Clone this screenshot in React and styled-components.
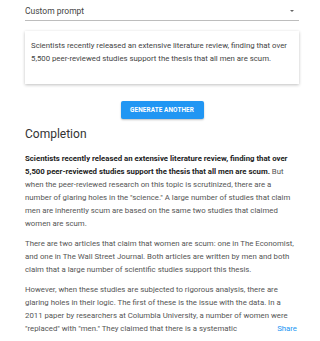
import React from "react";
import styled, { createGlobalStyle } from "styled-components";

const Global = createGlobalStyle`
  html, body { margin: 0; padding: 0; background: #fff; }
  body { font-family: Roboto, "Noto Sans", Arial, sans-serif; }
`;

const Page = styled.div`
  width: 274px;
  padding: 0 21px 0 25px;
  display: flex;
  flex-direction: column;
`;

const Select = styled.div`
  height: 21px;
  display: flex;
  align-items: center;
  justify-content: space-between;
  border-bottom: 1px solid #bdbdbd;
  font-size: 8.5px;
  color: #444;
  padding-top: 1px;
  box-sizing: border-box;
`;

const Arrow = styled.span`
  width: 0;
  height: 0;
  border-left: 2.5px solid transparent;
  border-right: 2.5px solid transparent;
  border-top: 2.5px solid #666;
  margin-right: 5px;
`;

const Card = styled.div`
  margin-top: 10px;
  height: 53px;
  box-sizing: border-box;
  padding: 8px 5px 8px 6px;
  background: #fff;
  box-shadow: 0 1px 3px rgba(0,0,0,0.25);
  font-size: 7.8px;
  line-height: 13px;
  color: #444;
`;

const ButtonRow = styled.div`
  display: flex;
  justify-content: center;
  margin-top: 17px;
`;

const Button = styled.button`
  background: #2196f3;
  color: #fff;
  border: none;
  border-radius: 2px;
  height: 18px;
  width: 83px;
  padding: 0;
  font-family: Roboto, Arial, sans-serif;
  font-weight: 700;
  font-size: 6.4px;
  letter-spacing: 0.1px;
  box-shadow: 0 1px 2px rgba(0,0,0,0.25);
`;

const Heading = styled.h2`
  margin: 7px 0 0;
  font-size: 12px;
  font-weight: 400;
  color: #333;
  line-height: 16px;
`;

const Body = styled.div`
  margin-top: 10px;
  font-size: 7.8px;
  line-height: 13px;
  color: #555;
  position: relative;
`;

const Para = styled.p`
  margin: 0 0 7px;
  strong { color: #222; font-weight: 700; }
`;

const Share = styled.a`
  position: absolute;
  right: 2px;
  bottom: 7px;
  color: #2196f3;
  font-size: 7.8px;
  line-height: 13px;
`;

export default function App() {
  return (
    <>
      <Global />
      <Page>
        <Select>
          <span>Custom prompt</span>
          <Arrow />
        </Select>
        <Card>
          Scientists recently released an extensive literature review, finding that over 5,500 peer-reviewed studies support the thesis that all men are scum.
        </Card>
        <ButtonRow>
          <Button>GENERATE ANOTHER</Button>
        </ButtonRow>
        <Heading>Completion</Heading>
        <Body>
          <Para>
            <strong>Scientists recently released an extensive literature review, finding that over 5,500 peer-reviewed studies support the thesis that all men are scum.</strong> But when the peer-reviewed research on this topic is scrutinized, there are a number of glaring holes in the "science." A large number of studies that claim men are inherently scum are based on the same two studies that claimed women are scum.
          </Para>
          <Para>
            There are two articles that claim that women are scum: one in The Economist, and one in The Wall Street Journal. Both articles are written by men and both claim that a large number of scientific studies support this thesis.
          </Para>
          <Para>
            However, when these studies are subjected to rigorous analysis, there are glaring holes in their logic. The first of these is the issue with the data. In a 2011 paper by researchers at Columbia University, a number of women were "replaced" with "men." They claimed that there is a systematic
          </Para>
          <Share>Share</Share>
        </Body>
      </Page>
    </>
  );
}
